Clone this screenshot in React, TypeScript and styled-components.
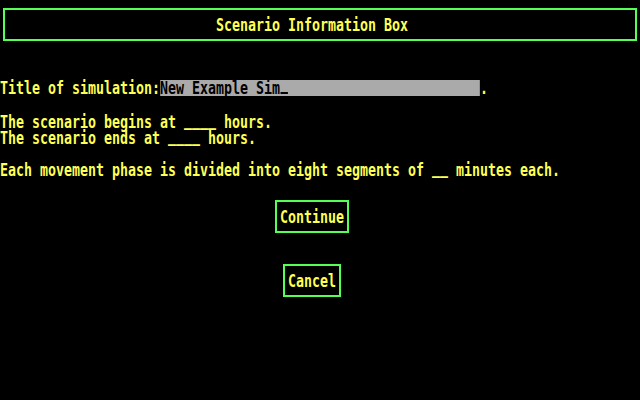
import styled, { createGlobalStyle } from 'styled-components';

// EGA-style text: 8px cells, glyphs squeezed horizontally from an 18px mono font
const CELL = 8;
const FONT_PX = 18;
const SQUEEZE = CELL / (FONT_PX * 0.60205);

const YELLOW = '#ffff55';
const GREEN = '#55ff55';
const GREY = '#aaaaaa';

const GlobalStyle = createGlobalStyle`
  html, body {
    margin: 0;
    padding: 0;
    background: #000;
    overflow: hidden;
  }
  body {
    width: 640px;
    height: 400px;
    font-family: "DejaVu Sans Mono", "Liberation Mono", monospace;
  }
`;

const Screen = styled.main`
  width: 640px;
  height: 400px;
  box-sizing: border-box;
  padding-top: 8px;
  display: flex;
  flex-direction: column;
  background: #000;
  color: ${YELLOW};
  font-weight: bold;
  overflow: hidden;
`;

const HeaderBox = styled.header`
  margin: 0 3px;
  height: 33px;
  box-sizing: border-box;
  border: 2px solid ${GREEN};
  padding-right: 16px;
  display: flex;
  align-items: center;
  justify-content: center;
`;

const Form = styled.section`
  margin-top: 39px;
  display: flex;
  flex-direction: column;
`;

const Row = styled.div`
  width: max-content;
  height: 16px;
  line-height: 16px;
  font-size: ${FONT_PX}px;
  white-space: pre;
  transform: scaleX(${SQUEEZE});
  transform-origin: 0 50%;
`;

const Spacer = styled.div<{ $rows: number }>`
  height: ${(p) => p.$rows * 16}px;
`;

const Field = styled.span<{ $cells: number }>`
  display: inline-block;
  vertical-align: top;
  width: ${(p) => p.$cells}ch;
  height: 16px;
  background: ${GREY};
  color: #000;
`;

const Cursor = styled.span`
  display: inline-block;
  width: 0.85ch;
  height: 2px;
  margin-left: 0.1ch;
  background: #000;
`;

const Blank = styled.span`
  vertical-align: 2px;
`;

const Buttons = styled.div`
  margin-top: 24px;
  padding-right: 16px;
  display: flex;
  flex-direction: column;
  align-items: center;
  gap: 31px;
`;

const Button = styled.button`
  height: 33px;
  box-sizing: border-box;
  margin: 0;
  padding: 0 3px;
  border: 2px solid ${GREEN};
  background: transparent;
  color: ${YELLOW};
  font: inherit;
  display: flex;
  align-items: center;
  cursor: pointer;
`;

const Label = styled.span<{ $cells: number }>`
  display: inline-block;
  width: ${(p) => p.$cells * CELL}px;
  height: 16px;
  line-height: 16px;
  font-size: ${FONT_PX}px;
  white-space: pre;
`;

const Squeezed = styled.span`
  display: inline-block;
  transform: scaleX(${SQUEEZE});
  transform-origin: 0 50%;
`;

const Text = ({ children }: { children: string }) => (
  <Label $cells={children.length}>
    <Squeezed>{children}</Squeezed>
  </Label>
);

export default function App() {
  return (
    <>
      <GlobalStyle />
      <Screen>
        <HeaderBox>
          <Text>Scenario Information Box</Text>
        </HeaderBox>

        <Form>
          <Row>
            Title of simulation:
            <Field $cells={40}>
              New Example Sim
              <Cursor />
            </Field>
            .
          </Row>
          <Spacer $rows={1} />
          <Row>
            The scenario begins at <Blank>____</Blank> hours.
          </Row>
          <Row>
            The scenario ends at <Blank>____</Blank> hours.
          </Row>
          <Spacer $rows={1} />
          <Row>
            Each movement phase is divided into eight segments of <Blank>__</Blank> minutes each.
          </Row>
        </Form>

        <Buttons>
          <Button>
            <Text>Continue</Text>
          </Button>
          <Button>
            <Text>Cancel</Text>
          </Button>
        </Buttons>
      </Screen>
    </>
  );
}
